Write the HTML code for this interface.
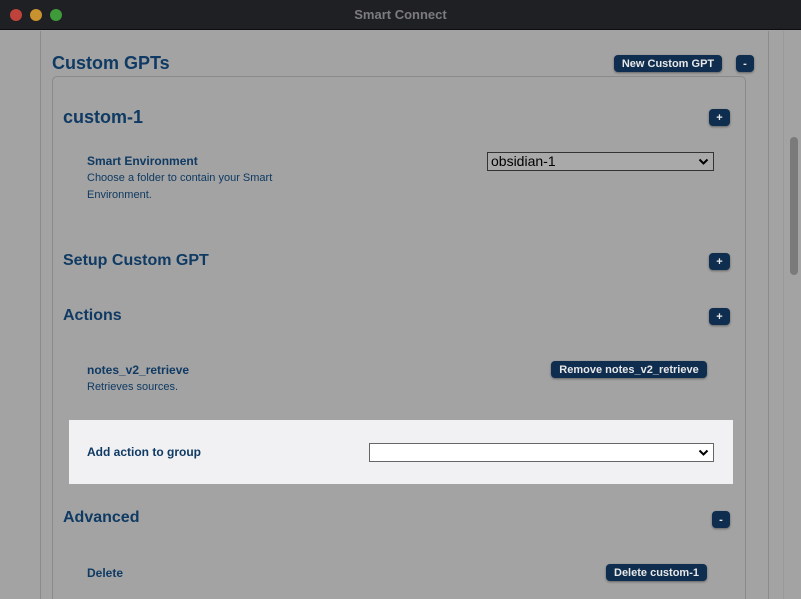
<!DOCTYPE html>
<html><head><style>
*{margin:0;padding:0;box-sizing:border-box}
html{width:801px;height:599px;overflow:hidden}
body{width:801px;height:599px;overflow:hidden;background:#a3a3a3;font-family:"Liberation Sans",Arial,sans-serif;position:relative}
.a{position:absolute}
.tb{left:0;top:0;width:801px;height:30px;background:#1f2024;border-bottom:1px solid #0d0d0f}
.dot{top:9px;width:12px;height:12px;border-radius:50%}
.h{color:#0f3a63;font-weight:bold}
.btn{background:#0f2e4f;color:#e8e8e8;font-weight:bold;font-size:11px;border-radius:4px;text-align:center;line-height:18px;height:17px;box-shadow:0 1px 2px rgba(0,0,0,.4)}
.sel{border:1px solid #333;background:#a9a9a9;height:19px;font-size:14px;padding-left:3px;line-height:17px;color:#000}
.chev{position:absolute;right:4px;top:3px}
.t{font-size:11px;color:#0f3a63;line-height:17px}
</style></head><body>
<div class="a tb"></div>
<div class="a dot" style="left:10px;background:#c0433b"></div>
<div class="a dot" style="left:30px;background:#c8922e"></div>
<div class="a dot" style="left:50px;background:#3f9a3a"></div>
<div class="a" style="left:0;width:801px;top:7px;text-align:center;color:#7b7b80;font-weight:bold;font-size:13px">Smart Connect</div>
<div class="a" style="left:40px;top:31px;width:1px;height:568px;background:#8a8a8a"></div>
<div class="a" style="left:768px;top:31px;width:1px;height:568px;background:#8a8a8a"></div>
<div class="a" style="left:783px;top:31px;width:1px;height:568px;background:#999"></div>
<div class="a" style="left:790px;top:137px;width:8px;height:138px;border-radius:4px;background:#7a7a7a"></div>
<div class="a" style="left:52px;top:76px;width:694px;height:530px;border:1px solid #8a8a8a;border-radius:5px"></div>
<div class="a h" style="left:52px;top:53px;font-size:18px">Custom GPTs</div>
<div class="a btn" style="left:614px;top:55px;width:108px">New Custom GPT</div>
<div class="a btn" style="left:736px;top:55px;width:18px">-</div>
<div class="a h" style="left:63px;top:107px;font-size:18px">custom-1</div>
<div class="a btn" style="left:709px;top:109px;width:21px">+</div>
<div class="a t h" style="left:87px;top:153px;font-size:12px">Smart Environment</div>
<div class="a t" style="left:87px;top:170px;width:200px">Choose a folder to contain your Smart Environment.</div>
<div class="a sel" style="left:487px;top:152px;width:227px">obsidian-1<svg class="chev" width="11" height="11" viewBox="0 0 11 11"><path d="M1.5 3.5L5.5 7.5L9.5 3.5" stroke="#000" stroke-width="2" fill="none"/></svg></div>
<div class="a h" style="left:63px;top:252px;font-size:16px">Setup Custom GPT</div>
<div class="a btn" style="left:709px;top:253px;width:21px">+</div>
<div class="a h" style="left:63px;top:307px;font-size:16px">Actions</div>
<div class="a btn" style="left:709px;top:308px;width:21px">+</div>
<div class="a t h" style="left:87px;top:362px;font-size:12px">notes_v2_retrieve</div>
<div class="a t" style="left:87px;top:379px">Retrieves sources.</div>
<div class="a btn" style="left:551px;top:361px;width:156px">Remove notes_v2_retrieve</div>
<div class="a" style="left:69px;top:420px;width:664px;height:64px;background:#f1f1f3"></div>
<div class="a t h" style="left:87px;top:444px;font-size:12px">Add action to group</div>
<div class="a sel" style="left:369px;top:443px;width:345px;background:#fff;border-color:#666"><svg class="chev" width="11" height="11" viewBox="0 0 11 11"><path d="M1.5 3.5L5.5 7.5L9.5 3.5" stroke="#000" stroke-width="2" fill="none"/></svg></div>
<div class="a h" style="left:63px;top:509px;font-size:16px">Advanced</div>
<div class="a btn" style="left:712px;top:511px;width:18px">-</div>
<div class="a t h" style="left:87px;top:565px;font-size:12px">Delete</div>
<div class="a btn" style="left:606px;top:564px;width:101px">Delete custom-1</div>
</body></html>
